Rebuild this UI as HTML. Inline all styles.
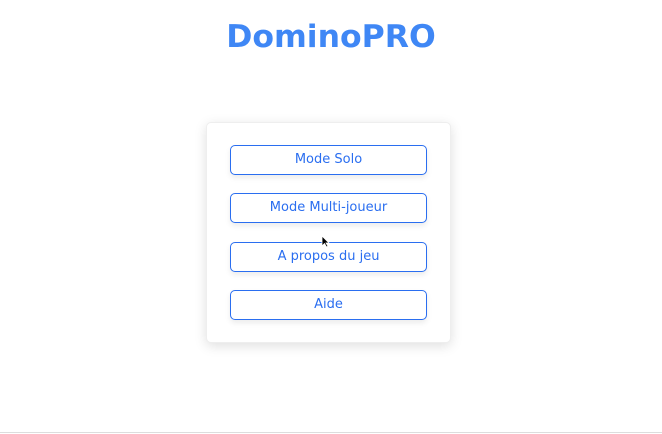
<!DOCTYPE html>
<html><head><style>
body{margin:0;width:662px;height:434px;background:#fff;position:relative;overflow:hidden;font-family:"DejaVu Sans","Liberation Sans",sans-serif}
h1{position:absolute;top:19px;left:0;width:662px;text-align:center;margin:0;font-size:31.5px;font-weight:bold;color:#3f87f5;font-family:"DejaVu Sans","Liberation Sans",sans-serif;letter-spacing:0}
.card{position:absolute;left:206px;top:122px;width:245px;height:221px;background:#fff;border-radius:5px;box-shadow:0 3px 12px rgba(0,0,0,.13);border:1px solid #eee;box-sizing:border-box}
.b{position:absolute;left:230px;width:197px;height:30px;box-sizing:border-box;border:1px solid #2a6ef0;border-radius:5px;color:#2a6ef0;font-size:13px;text-align:center;line-height:28px;background:#fff;box-shadow:0 3px 6px rgba(0,0,0,.08)}
.line{position:absolute;left:0;top:432px;width:662px;height:1px;background:#ddd}
</style></head><body>
<h1>DominoPRO</h1>
<div class="card"></div>
<div class="b" style="top:145px">Mode Solo</div>
<div class="b" style="top:193px">Mode Multi-joueur</div>
<div class="b" style="top:242px">A propos du jeu</div>
<div class="b" style="top:290px">Aide</div>
<svg style="position:absolute;left:321px;top:235px" width="9" height="13" viewBox="0 0 9 13"><path d="M1 1 L1 11 L3.5 8.5 L5.5 12 L7 11.2 L5 8 L8 8 Z" fill="#000" stroke="#fff" stroke-width=".8"/></svg>
<div class="line"></div>
</body></html>
